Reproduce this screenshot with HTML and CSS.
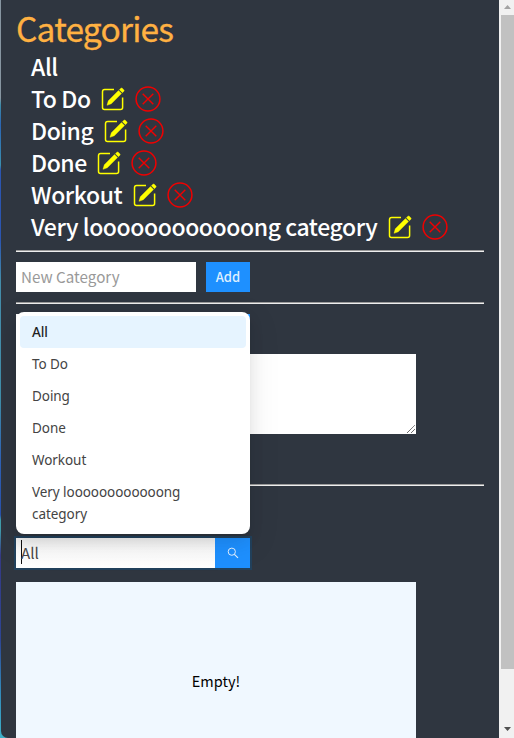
FILE: index.html
```html
<!DOCTYPE html>
<html lang="en">
<head>
<meta charset="utf-8">
<title>Categories</title>
<link rel="stylesheet" href="styles.css">
</head>
<body>
<svg class="defs" width="0" height="0">
  <symbol id="edit" viewBox="0 0 26 26">
    <path d="M14 3.5H4.7Q2.5 3.5 2.5 5.7V21.500Q2.500 23.500 4.500 23.500H20.500Q22.600 23.500 22.600 21.500V11.500" fill="none" stroke="currentColor" stroke-width="1.500"/>
    <path d="M7 19.300l1.300-4.500L18.500 4.600l3 3L11.300 17.800zM19.400 3.700l1.500-1.500q.7-.5 1.400.1l1.600 1.600q.6.7 0 1.400l-1.500 1.400z" fill="currentColor" stroke="currentColor" stroke-width=".4"/>
  </symbol>
  <symbol id="remove" viewBox="0 0 26 26">
    <circle cx="13" cy="13" r="11.900" fill="none" stroke="currentColor" stroke-width="1.500"/>
    <path d="M7.700 7.700l10.600 10.600M18.300 7.700L7.700 18.300" fill="none" stroke="currentColor" stroke-width="1.400"/>
  </symbol>
</svg>
<div class="window">
  <main class="page">
    <h1 class="title">Categories</h1>
    <ul class="categories">
      <li><span class="name">All</span></li>
      <li><span class="name">To Do</span><svg class="icon edit"><use href="#edit"/></svg><svg class="icon remove"><use href="#remove"/></svg></li>
      <li><span class="name">Doing</span><svg class="icon edit"><use href="#edit"/></svg><svg class="icon remove"><use href="#remove"/></svg></li>
      <li><span class="name">Done</span><svg class="icon edit"><use href="#edit"/></svg><svg class="icon remove"><use href="#remove"/></svg></li>
      <li><span class="name">Workout</span><svg class="icon edit"><use href="#edit"/></svg><svg class="icon remove"><use href="#remove"/></svg></li>
      <li><span class="name">Very loooooooooooong category</span><svg class="icon edit"><use href="#edit"/></svg><svg class="icon remove"><use href="#remove"/></svg></li>
    </ul>
    <hr class="rule">
    <div class="form-row">
      <div class="field">New Category</div>
      <div class="button">Add</div>
    </div>
    <hr class="rule">
    <div class="task-form">
      <div class="task-row"><div class="task-title"></div><div class="task-add"></div></div>
      <div class="textarea"><svg class="grip" viewBox="0 0 10 10"><path d="M1 9L9 1M5 9L9 5" stroke="#555" stroke-width="1" stroke-dasharray="1.200 .3"/></svg></div>
    </div>
    <hr class="rule">
    <div class="filter">
      <div class="select"><span class="caret"></span>All</div>
      <div class="search"><svg viewBox="0 0 12 12"><circle cx="4.800" cy="4.700" r="3.600" fill="none" stroke="currentColor" stroke-width="1"/><path d="M7.400 7.300L11 10.800" stroke="currentColor" stroke-width="1.100"/></svg></div>
      <div class="dropdown">
        <div class="option selected">All</div>
        <div class="option">To Do</div>
        <div class="option">Doing</div>
        <div class="option">Done</div>
        <div class="option">Workout</div>
        <div class="option">Very loooooooooooong category</div>
      </div>
    </div>
    <div class="tasks">Empty!</div>
  </main>
  <div class="scrollbar">
    <svg class="arrow" viewBox="0 0 13 15"><path d="M3 9l3.500-4L10 9z" fill="#a3a3a3"/></svg>
    <div class="thumb"></div>
    <svg class="arrow down" viewBox="0 0 13 15"><path d="M3 4h7L6.500 8z" fill="#505050"/></svg>
  </div>
</div>
</body>
</html>
```

FILE: styles.css
```css
* { box-sizing: border-box; }
body {
  margin: 0;
  height: 738px;
  overflow: hidden;
  font-family: "Noto Sans CJK SC", "Noto Sans", sans-serif;
  background: linear-gradient(#8796a1 0 98px, #3c8ba8 105px, #2b65b4 125px, #3a8fae 165px, #2b55b0 170px 240px, #438ca9 281px 340px, #3e8ca7 400px, #2e60b3 460px, #2850a9 515px, #3f9ba9 520px 530px, #353983 555px, #2d4593 640px, #3288b9 690px, #3db0c8);
}
.defs { position: absolute; }
.window { display: flex; height: 738px; padding-left: 1px; }
.page {
  width: 498px;
  height: 738px;
  padding: 10px 15px 0;
  overflow: hidden;
  background: #2f3640;
  border-bottom-left-radius: 7px;
}
.title {
  margin: 0;
  height: 41px;
  line-height: 35px;
  font-size: 33.500px;
  font-weight: 400;
  letter-spacing: -.8px;
  color: #ffb142;
  -webkit-text-stroke: .3px #ffb142;
}
.categories { margin: 0; padding: 0 0 0 15px; list-style: none; }
.categories li { display: flex; align-items: center; height: 32px; }
.name { height: 32px; line-height: 30px; font-size: 23px; font-weight: 500; letter-spacing: -.43px; color: #fff; white-space: nowrap; }
.icon { width: 26px; height: 26px; flex: none; }
.edit { margin-left: 9.500px; color: #ff0; }
.remove { margin-left: 9px; color: #f00000; }
.rule {
  margin: 0;
  height: 2px;
  border: 0;
  border-top: 1px solid #9a9a9a;
  background: #eee;
}
.categories + .rule { margin-top: 7px; }
.form-row { display: flex; gap: 10px; padding: 10px 0; }
.field { width: 180px; height: 30px; padding-left: 5px; line-height: 28px; font-size: 15.2px; color: #999; background: #fff; }
.button { width: 44px; height: 30px; line-height: 29px; font-size: 13px; font-weight: 500; text-align: center; color: #dceeff; background: #1e90ff; }
.task-form { height: 182px; padding-top: 10px; }
.task-row { display: flex; height: 40px; }
.task-title { width: 190px; height: 30px; background: #fff; }
.task-add { width: 44px; height: 30px; background: #1e90ff; }
.textarea { display: flex; align-items: flex-end; justify-content: flex-end; width: 400px; height: 80px; background: #fff; }
.grip { width: 10px; height: 10px; }
.task-form + .rule { margin-top: -2px; }
.filter { position: relative; display: flex; width: 234px; height: 30px; margin-top: 52px; box-shadow: 0 0 0 2px rgba(5, 95, 165, .28); }
.select { display: flex; align-items: center; width: 199px; padding: 0 0 2px 5px; font-size: 15.2px; line-height: 28px; color: #484848; background: linear-gradient(#efefef, #fafafa 40%, #fff); }
.caret { width: 1px; height: 24px; margin-right: -1px; background: #111; }
.search { display: flex; align-items: center; justify-content: center; width: 35px; color: #e5f2ff; background: #1e90ff; }
.search svg { width: 12px; height: 12px; }
.dropdown {
  position: absolute;
  left: 0;
  bottom: 34px;
  width: 234px;
  height: 222px;
  padding: 4px;
  border-radius: 8px;
  background: #fff;
  box-shadow: 0 6px 16px rgba(0, 0, 0, .08), 0 3px 6px -4px rgba(0, 0, 0, .12), 0 9px 28px 8px rgba(0, 0, 0, .05);
}
.option { padding: 5px 12px; border-radius: 4px; font: 400 13.500px/22px "Noto Sans", sans-serif; letter-spacing: -.06px; color: #444; }
.selected { font-weight: 500; color: #1f1f1f; background: #e6f4ff; }
.tasks { width: 400px; height: 200px; margin-top: 14px; line-height: 198px; font-size: 14.500px; text-align: center; color: #000; background: #f0f8ff; }
.scrollbar { display: flex; flex-direction: column; width: 15px; padding-left: 2px; background: #f1f1f1; }
.arrow { width: 13px; height: 15px; }
.thumb { height: 654px; background: #c1c1c1; }
.down { margin-top: auto; }
```
